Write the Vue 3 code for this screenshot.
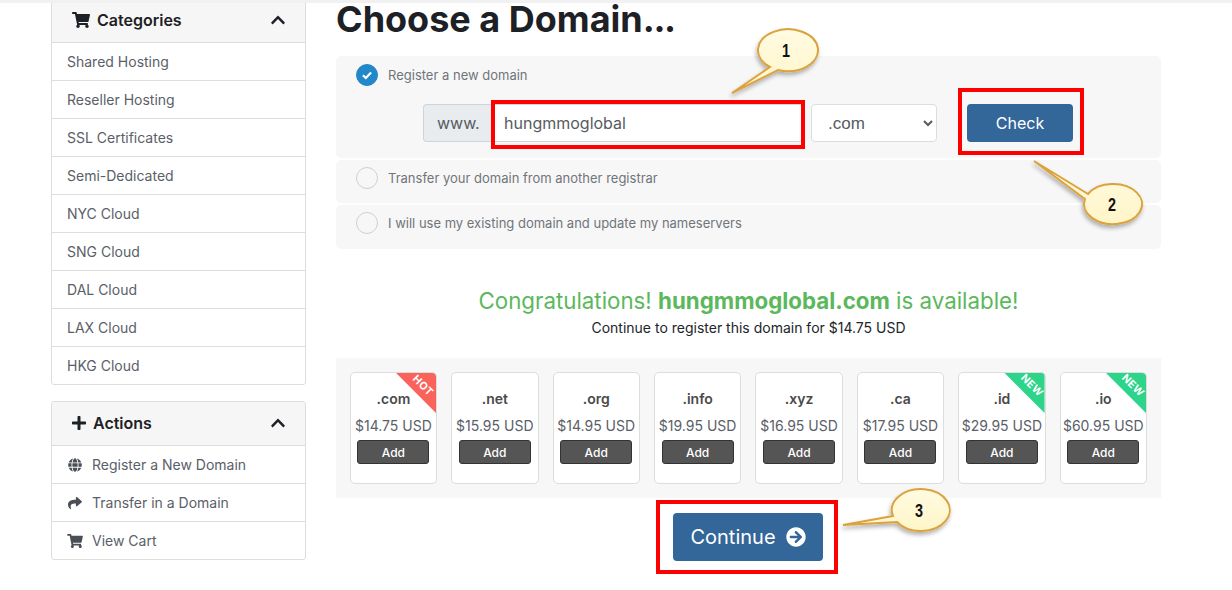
<template>
  <main class="page">
    <div class="topbar"></div>

    <div class="layout">
      <aside class="sidebar">
        <section class="card first">
          <header class="card-head">
            <svg class="head-icon cart" viewBox="0 0 576 512"><path :d="icons.cart" /></svg>
            <h3>Categories</h3>
            <svg class="chevron" viewBox="0 0 448 512"><path :d="icons.chevron" /></svg>
          </header>
          <a v-for="item in categories" :key="item" class="item" href="#">{{ item }}</a>
        </section>

        <section class="card">
          <header class="card-head">
            <svg class="head-icon plus" viewBox="0 0 448 512"><path :d="icons.plus" /></svg>
            <h3>Actions</h3>
            <svg class="chevron" viewBox="0 0 448 512"><path :d="icons.chevron" /></svg>
          </header>
          <a v-for="action in actions" :key="action.label" class="item" href="#">
            <svg class="item-icon" :viewBox="action.box"><path :d="action.path" /></svg>
            {{ action.label }}
          </a>
        </section>
      </aside>

      <section class="content">
        <h1>Choose a Domain<span class="dots">...</span></h1>

        <div class="panel first-panel">
          <label class="option">
            <span class="radio checked">
              <svg viewBox="0 0 22 22"><path d="M6.5 11.2l3.2 3.1 5.8-6" /></svg>
            </span>
            Register a new domain
          </label>
          <div class="search-row">
            <div class="input-group">
              <span class="addon">www.</span>
              <input class="domain-input" type="text" v-model="domain" />
            </div>
            <select class="tld-select">
              <option>.com</option>
              <option>.net</option>
              <option>.org</option>
            </select>
            <button class="check-btn" type="button">Check</button>
          </div>
        </div>

        <div class="panel">
          <label class="option"><span class="radio"></span>Transfer your domain from another registrar</label>
        </div>
        <div class="panel last-panel">
          <label class="option"><span class="radio"></span>I will use my existing domain and update my nameservers</label>
        </div>

        <div class="result">
          <p class="congrats">Congratulations! <strong>{{ domain }}.com</strong> is available!</p>
          <p class="register-note">Continue to register this domain for $14.75 USD</p>
        </div>

        <div class="tld-panel">
          <div v-for="tld in tlds" :key="tld.name" class="tld-card">
            <span v-if="tld.tag" class="ribbon" :class="tld.tag.toLowerCase()"><span>{{ tld.tag }}</span></span>
            <div class="tld-name">{{ tld.name }}</div>
            <div class="tld-price">{{ tld.price }}</div>
            <button class="add-btn" type="button">Add</button>
          </div>
        </div>

        <div class="continue-row">
          <button class="continue-btn" type="button">
            Continue
            <svg viewBox="0 0 512 512"><path :d="icons.arrow" /></svg>
          </button>
        </div>
      </section>
    </div>

    <!-- annotations drawn over the page -->
    <svg class="annotations" viewBox="0 0 1232 590">
      <defs>
        <linearGradient id="bubble" x1="0" y1="0" x2="0" y2="1">
          <stop offset="0" stop-color="#fffbe2" />
          <stop offset="1" stop-color="#fff5c8" />
        </linearGradient>
        <filter id="soft" x="-20%" y="-20%" width="140%" height="150%">
          <feDropShadow dx="-1" dy="3" stdDeviation="2" flood-color="#000" flood-opacity="0.3" />
        </filter>
      </defs>
      <rect x="493" y="102" width="310" height="45" class="red-box" />
      <rect x="960" y="90" width="122" height="63" class="red-box" />
      <rect x="658" y="502" width="178" height="70" class="red-box" />
      <g v-for="note in notes" :key="note.label">
        <path :d="note.path" class="bubble" />
        <text :x="note.x" :y="note.y" textLength="8" lengthAdjust="spacingAndGlyphs" class="bubble-label">{{ note.label }}</text>
      </g>
    </svg>
  </main>
</template>

<script setup>
import { ref } from 'vue'

const domain = ref('hungmmoglobal')

const icons = {
  cart: 'M528.12 301.319l47.273-208C578.806 78.301 567.391 64 551.99 64H159.208l-9.166-44.81C147.758 8.021 137.93 0 126.529 0H24C10.745 0 0 10.745 0 24v16c0 13.255 10.745 24 24 24h69.883l70.248 343.435C147.325 417.1 136 435.222 136 456c0 30.928 25.072 56 56 56s56-25.072 56-56c0-15.674-6.447-29.835-16.824-40h209.647C430.447 426.165 424 440.326 424 456c0 30.928 25.072 56 56 56s56-25.072 56-56c0-22.172-12.888-41.332-31.579-50.405l5.517-24.276c3.413-15.018-8.002-29.319-23.403-29.319H218.117l-6.545-32h293.145c11.206 0 20.92-7.754 23.403-18.681z',
  chevron: 'M240.971 130.524l194.343 194.343c9.373 9.373 9.373 24.569 0 33.941l-22.667 22.667c-9.357 9.357-24.522 9.375-33.901.04L224 227.495 69.255 381.516c-9.379 9.335-24.544 9.317-33.901-.04l-22.667-22.667c-9.373-9.373-9.373-24.569 0-33.941L207.03 130.525c9.372-9.373 24.568-9.373 33.941-.001z',
  plus: 'M416 208H272V64c0-17.67-14.33-32-32-32h-32c-17.67 0-32 14.33-32 32v144H32c-17.67 0-32 14.33-32 32v32c0 17.67 14.33 32 32 32h144v144c0 17.67 14.33 32 32 32h32c17.67 0 32-14.33 32-32V304h144c17.67 0 32-14.33 32-32v-32c0-17.67-14.33-32-32-32z',
  share: 'M503.691 189.836L327.687 37.851C312.281 24.546 288 35.347 288 56.015v80.053C127.371 137.907 0 170.1 0 322.326c0 61.441 39.581 122.309 83.333 154.132 13.653 9.931 33.111-2.533 28.077-18.631C66.066 312.814 132.917 274.316 288 272.085V360c0 20.7 24.3 31.453 39.687 18.164l176.004-152c11.071-9.562 11.086-26.753 0-36.328z',
  globe: 'M336.5 160C322 70.7 287.8 8 248 8s-74 62.7-88.5 152h177zM152 256c0 22.2 1.2 43.5 3.3 64h185.3c2.1-20.5 3.3-41.8 3.3-64s-1.2-43.5-3.3-64H155.3c-2.1 20.5-3.3 41.8-3.3 64zm324.7-96c-28.6-67.9-86.5-120.4-158-141.6 24.4 33.8 41.2 84.7 50 141.6h108zM177.2 18.4C105.8 39.6 47.8 92.1 19.3 160h108c8.7-56.9 25.5-107.8 49.9-141.6zM487.4 192H372.7c2.1 21 3.3 42.5 3.3 64s-1.2 43-3.3 64h114.6c5.5-20.5 8.6-41.8 8.6-64s-3.1-43.5-8.5-64zM120 256c0-21.5 1.2-43 3.3-64H8.6C3.2 212.5 0 233.8 0 256s3.2 43.5 8.6 64h114.6c-2-21-3.2-42.5-3.2-64zm39.5 96c14.5 89.3 48.7 152 88.5 152s74-62.7 88.5-152h-177zm159.3 141.6c71.4-21.2 129.4-73.7 158-141.6h-108c-8.8 56.9-25.6 107.8-50 141.6zM19.3 352c28.6 67.9 86.5 120.4 158 141.6-24.4-33.8-41.2-84.7-50-141.6h-108z',
  arrow: 'M256 8c137 0 248 111 248 248S393 504 256 504 8 393 8 256 119 8 256 8zm-28.9 143.6l75.5 72.4H120c-13.3 0-24 10.7-24 24v16c0 13.3 10.7 24 24 24h182.6l-75.5 72.4c-9.7 9.3-9.9 24.8-.4 34.3l11 10.9c9.4 9.4 24.6 9.4 33.9 0L404.3 273c9.4-9.4 9.4-24.6 0-33.9L271.6 106.3c-9.4-9.4-24.6-9.4-33.9 0l-11 10.9c-9.5 9.6-9.3 25.1.4 34.4z'
}

const categories = [
  'Shared Hosting',
  'Reseller Hosting',
  'SSL Certificates',
  'Semi-Dedicated',
  'NYC Cloud',
  'SNG Cloud',
  'DAL Cloud',
  'LAX Cloud',
  'HKG Cloud'
]

const actions = [
  { label: 'Register a New Domain', path: icons.globe, box: '0 0 496 512' },
  { label: 'Transfer in a Domain', path: icons.share, box: '0 0 512 512' },
  { label: 'View Cart', path: icons.cart, box: '0 0 576 512' }
]

const tlds = [
  { name: '.com', price: '$14.75 USD', tag: 'HOT' },
  { name: '.net', price: '$15.95 USD' },
  { name: '.org', price: '$14.95 USD' },
  { name: '.info', price: '$19.95 USD' },
  { name: '.xyz', price: '$16.95 USD' },
  { name: '.ca', price: '$17.95 USD' },
  { name: '.id', price: '$29.95 USD', tag: 'NEW' },
  { name: '.io', price: '$60.95 USD', tag: 'NEW' }
]

const notes = [
  { label: '1', x: 782, y: 57, path: 'M770 67L732 93L778 70A30 21 0 1 0 770 67Z' },
  { label: '2', x: 1108, y: 211, path: 'M1088 194L1034 161L1085 199A29 20 0 1 0 1088 194Z' },
  { label: '3', x: 915, y: 517, path: 'M893 516L843 525L897 522A29 21 0 1 0 893 516Z' }
]
</script>

<style>
html,
body {
  margin: 0;
  background: #fff;
}
</style>

<style scoped>
.page {
  position: relative;
  width: 1232px;
  height: 590px;
  overflow: hidden;
  font-family: Inter, "Liberation Sans", sans-serif;
  background: #fff;
}

.topbar {
  position: absolute;
  top: 0;
  left: 0;
  right: 0;
  height: 3px;
  background: #f1f1f1;
  z-index: 2;
}

.layout {
  display: flex;
  padding-left: 51px;
  gap: 30px;
}

/* Sidebar */
.sidebar {
  width: 255px;
  flex: none;
}

.card {
  border: 1px solid #ddd;
  border-radius: 3px;
  margin-bottom: 16px;
  overflow: hidden;
}

.card.first {
  margin-top: -2px;
}

.card-head {
  display: flex;
  align-items: center;
  height: 41px;
  padding: 0 20px 2px;
  background: #f6f6f6;
  border-bottom: 1px solid #ddd;
}

.card-head h3 {
  margin: 0;
  flex: 1;
  font-size: 16px;
  font-weight: 600;
  color: #1d2125;
}

.head-icon {
  height: 16px;
  fill: #1d2125;
  margin-right: 7px;
}

.head-icon.cart {
  width: 18px;
}

.head-icon.plus {
  width: 14px;
}

.chevron {
  width: 14px;
  height: 16px;
  fill: #1d2125;
}

.item {
  display: flex;
  align-items: center;
  height: 37px;
  padding-left: 15px;
  font-size: 14px;
  color: #5a6068;
  text-decoration: none;
  border-bottom: 1px solid #ddd;
}

.item:last-child {
  border-bottom: 0;
}

.item-icon {
  width: 16px;
  height: 14px;
  margin-right: 9px;
  fill: #4a4f55;
}

/* Main column */
.content {
  width: 825px;
  flex: none;
}

h1 {
  margin: 0 0 17px;
  font-size: 36px;
  line-height: 39px;
  font-weight: 700;
  color: #1d2125;
}

.dots {
  letter-spacing: -1.4px;
}

.panel {
  background: #f7f7f7;
  border-radius: 5px;
  padding: 7px 20px;
  height: 43px;
  box-sizing: border-box;
  margin-bottom: 2px;
}

.first-panel {
  height: 102px;
  padding-top: 8px;
}

.last-panel {
  height: 44px;
}

.option {
  display: flex;
  align-items: center;
  gap: 10px;
  font-size: 13px;
  color: #70757b;
}

.radio {
  width: 22px;
  height: 22px;
  box-sizing: border-box;
  border: 1px solid #d3d0c8;
  border-radius: 50%;
  flex: none;
}

.radio.checked {
  background: #2388c9;
  border-color: #2388c9;
}

.radio svg {
  display: block;
  width: 20px;
  height: 20px;
  fill: none;
  stroke: #fff;
  stroke-width: 2.4;
}

.search-row {
  display: flex;
  align-items: stretch;
  height: 38px;
  margin: 18px 0 0 67px;
}

.input-group {
  display: flex;
  width: 380px;
  flex: none;
}

.addon {
  display: flex;
  align-items: center;
  box-sizing: border-box;
  width: 68px;
  padding-left: 13px;
  font-size: 16px;
  color: #555b62;
  background: #e9ecef;
  border: 1px solid #ced4da;
  border-right: 0;
  border-radius: 4px 0 0 4px;
}

.domain-input {
  flex: 1;
  min-width: 0;
  box-sizing: border-box;
  padding: 0 12px;
  font: 16px Inter, sans-serif;
  color: #555b62;
  background: #fff;
  border: 1px solid #ced4da;
  border-radius: 0 4px 4px 0;
  outline: none;
}

.tld-select {
  width: 126px;
  margin-left: 8px;
  padding-left: 12px;
  font: 17px "Liberation Sans", Arial, sans-serif;
  color: #555b62;
  background: #fff;
  border: 1px solid #ddd;
  border-radius: 4px;
}

.check-btn {
  width: 106px;
  margin-left: 30px;
  font: 16px Inter, sans-serif;
  color: #fff;
  background: #336699;
  border: 0;
  border-radius: 4px;
}

.result {
  margin-top: 37px;
  text-align: center;
}

.congrats {
  margin: 0;
  font-size: 22.3px;
  line-height: 30px;
  color: #5cb85c;
}

.register-note {
  margin: 1px 0 0;
  font-size: 14px;
  line-height: 21px;
  color: #212529;
}

/* TLD grid */
.tld-panel {
  display: grid;
  grid-template-columns: repeat(8, 1fr);
  gap: 14px;
  margin-top: 20px;
  padding: 14px 14px 14px 13.7px;
  height: 140px;
  box-sizing: border-box;
  background: #f7f7f7;
}

.tld-card {
  position: relative;
  overflow: hidden;
  height: 112px;
  box-sizing: border-box;
  padding-top: 17px;
  text-align: center;
  background: #fff;
  border: 1px solid #ddd;
  border-radius: 5px;
}

.tld-name {
  font-size: 14px;
  line-height: 17px;
  font-weight: 600;
  color: #4a4a4a;
}

.tld-price {
  margin-top: 10px;
  font-size: 14px;
  line-height: 17px;
  white-space: nowrap;
  color: #5a6068;
}

.add-btn {
  display: block;
  width: 72px;
  height: 24px;
  margin: 6px auto 0;
  padding: 0;
  font: 500 12px Inter, sans-serif;
  color: #fff;
  background: #555;
  border: 1px solid #333;
  border-radius: 3px;
}

.ribbon {
  position: absolute;
  top: 0;
  right: 0;
  width: 40px;
  height: 40px;
  clip-path: polygon(0 0, 100% 0, 100% 100%);
}

.ribbon.hot {
  background: #f9635c;
}

.ribbon.new {
  background: #2dd48a;
}

.ribbon span {
  position: absolute;
  top: 7px;
  right: -4px;
  width: 34px;
  text-align: center;
  font-size: 10.5px;
  line-height: 11px;
  font-weight: 700;
  letter-spacing: 0.4px;
  color: #fff;
  transform: rotate(45deg);
}

.continue-row {
  display: flex;
  justify-content: center;
  margin-top: 15px;
  padding-right: 1px;
}

.continue-btn {
  display: flex;
  align-items: center;
  justify-content: center;
  gap: 10px;
  width: 150px;
  height: 48px;
  padding: 0;
  font: 20px Inter, sans-serif;
  color: #fff;
  background: #336699;
  border: 0;
  border-radius: 4px;
}

.continue-btn svg {
  width: 20px;
  height: 20px;
  fill: #fff;
}

/* Annotations */
.annotations {
  position: absolute;
  top: 0;
  left: 0;
  width: 1232px;
  height: 590px;
  pointer-events: none;
}

.red-box {
  fill: none;
  stroke: #ff0000;
  stroke-width: 4;
}

.bubble {
  fill: url(#bubble);
  stroke: #dba23c;
  stroke-width: 2;
  filter: url(#soft);
}

.bubble-label {
  font-family: "Liberation Sans", Arial, sans-serif;
  font-size: 18px;
  font-weight: 700;
  fill: #111;
}
</style>
